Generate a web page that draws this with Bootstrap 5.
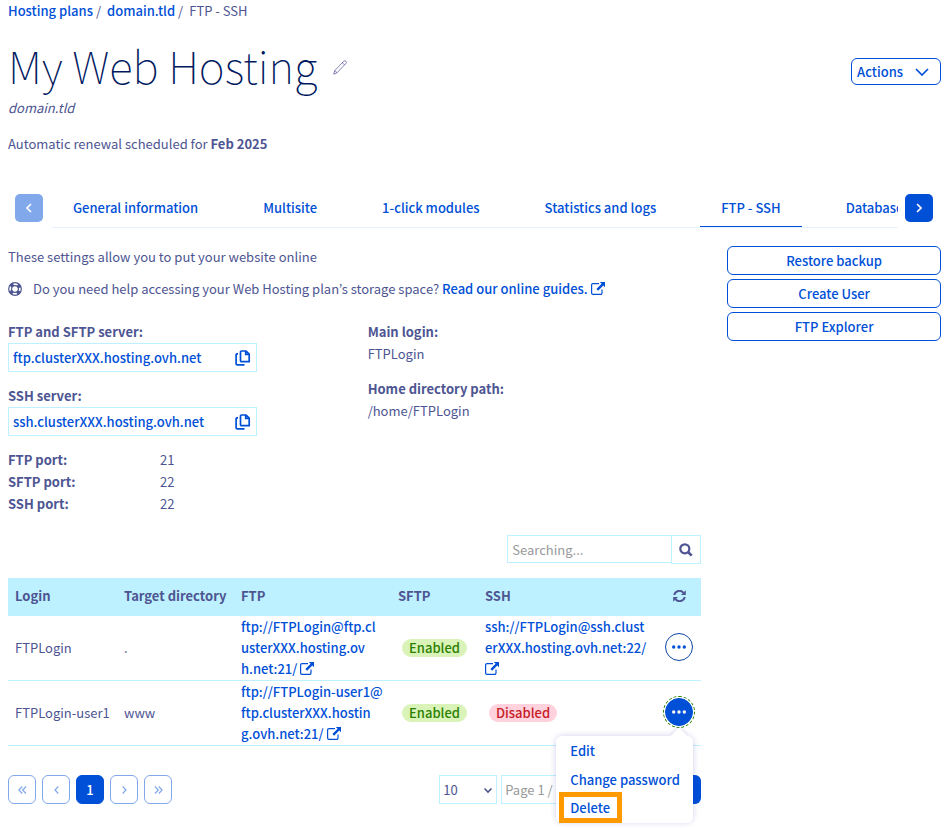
<!DOCTYPE html>
<html lang="en">
<head>
<meta charset="utf-8">
<meta name="viewport" content="width=device-width, initial-scale=1">
<title>My Web Hosting - FTP - SSH</title>
<link rel="stylesheet" href="https://cdn.jsdelivr.net/npm/bootstrap@5.3.0/dist/css/bootstrap.min.css">
<style>
:root{--link:#0050d7;--ink:#4d5592;--line:#bef1ff}
body{font-family:"Noto Sans CJK KR","Source Sans Pro",sans-serif;font-size:13px;line-height:22px;color:var(--ink)}
a{color:var(--link);text-decoration:none;font-weight:500}
a:hover{text-decoration:underline}
strong,dt,th{font-weight:700}
svg{fill:currentColor;flex:none}
.page{padding:0 7px 24px 8px;overflow-x:clip}
.crumbs{--bs-breadcrumb-divider-color:var(--ink);--bs-breadcrumb-item-active-color:var(--ink);--bs-breadcrumb-item-padding-x:4px;font-size:13px}
.crumbs .breadcrumb-item+.breadcrumb-item{padding-left:3px}
.crumbs .breadcrumb-item+.breadcrumb-item::before{padding-right:6px}
.head{padding-top:13px}
.title{font-family:"Noto Sans CJK KR Thin","Noto Sans CJK KR Light","Noto Sans CJK KR",sans-serif;font-size:44px;line-height:60px;font-weight:100;color:#00185e}
.subtitle{margin:2px 0 14px}
.btn-line{--bs-btn-color:var(--link);--bs-btn-border-color:var(--link);--bs-btn-hover-color:#fff;--bs-btn-hover-bg:var(--link);--bs-btn-padding-x:5px;--bs-btn-padding-y:2px;--bs-btn-font-size:13px;--bs-btn-border-radius:6px;--bs-btn-line-height:23px;font-weight:500}
.btn-actions{--bs-btn-line-height:21px;gap:12px;padding-right:11px;margin-top:23px}
.tab-bar{padding:34px 8px 0 7px}
.btn-arrow{width:28px;height:28px;background:var(--link);color:#fff;border:0;border-radius:5px;margin-bottom:2px}
.btn-arrow:disabled{background:#80a8eb;opacity:1;color:#fff}
.tabs{border-bottom:1px solid #e6f2ff;overflow:hidden;gap:23px;min-width:0;margin:0 7px 0 9px}
.tabs .nav-link{color:var(--link);font-weight:500;padding:8px 21px 7px;border-bottom:1px solid transparent;white-space:nowrap}
.tabs .nav-link.active{border-color:var(--link)}
.cols{--bs-gutter-x:26px}
.body-row{padding-top:18px}
.help-line{gap:11px;padding-top:2px;margin-bottom:21px}
.copy-box{border:1px solid var(--line);width:249px;height:29px;padding:0 5px 0 4px;margin-bottom:13px}
.copy-box .btn{color:var(--link)}
.ports{display:grid;grid-template-columns:152px 1fr;margin-bottom:20px}
.login-info dd{margin-bottom:13px}
.search{width:194px;margin-bottom:14px}
.search .form-control{border:1px solid var(--line);border-radius:0;font-size:13px;line-height:22px;padding:2px 4px;height:28px}
.search .btn{border:1px solid var(--line);border-radius:0;width:30px;height:29px;color:var(--ink)}
.form-control::placeholder{color:#999}
.grid-table{table-layout:fixed;--bs-table-bg:transparent;--bs-table-color:var(--ink);color:var(--ink);border-color:var(--line)}
.grid-table>thead th{background:var(--line);padding:7px 7px 8px;vertical-align:middle}
.grid-table>tbody td{padding:0 7px 1px;line-height:21px;vertical-align:middle;border-color:var(--line)}
.grid-table>tbody td:last-child{padding:0 8px 2px}
.grid-table td.url{word-break:break-all}
.ext{vertical-align:-1px}
.w-login{width:109px}.w-dir{width:117px}.w-ftp{width:157px}.w-sftp{width:87px}.w-act{width:44px}
.pill{font-size:13px;line-height:18px;font-weight:500;padding:0 7px;border-radius:9px;display:inline-block;margin-left:4px}
.pill-on{background:#daf3b9;color:#2b8000}
.pill-off{background:#ffd2dd;color:#c51b27}
.dots{width:28px;height:28px;border-radius:50%;border:1px solid #0b45a8;color:var(--link);background:#fff}
.dots-open{background:var(--link);color:#fff;border-color:var(--link);outline:1px dashed #2b8000;outline-offset:1px}
.act-menu{position:absolute;top:38px;right:0;width:137px;height:86px;background:#fff;border-radius:6px;box-shadow:0 0 6px rgba(0,14,156,.2);z-index:5}
.act-menu::before{content:"";position:absolute;top:-6px;right:8px;width:12px;height:12px;background:#fff;transform:rotate(45deg);box-shadow:-2px -2px 3px rgba(0,14,156,.08)}
.act-menu ul{position:relative;background:#fff;border-radius:6px}
.act-menu a{display:block;line-height:29px;padding-left:14px}
.act-menu .marked{border:5px solid #f90;width:63px;line-height:21px;padding-left:6px;margin:-2px 0 0 3px}
.table-foot{padding-top:5px}
.pager{--bs-pagination-color:#80a8eb;--bs-pagination-border-color:#80a8eb;--bs-pagination-disabled-color:#80a8eb;--bs-pagination-disabled-border-color:#80a8eb;--bs-pagination-disabled-bg:#fff;--bs-pagination-active-bg:var(--link);--bs-pagination-active-border-color:var(--link);gap:6px}
.pager .page-item .page-link{width:28px;height:29px;padding:0;border-radius:6px;margin:0;display:flex;align-items:center;justify-content:center;font-size:13px}
.size-select{width:58px;height:29px;font-size:13px;line-height:22px;border:1px solid var(--line);border-radius:0;color:var(--ink);padding:2px 16px 2px 3px;background-size:10px;background-position:right 3px center;background-image:url("data:image/svg+xml,%3Csvg xmlns='http://www.w3.org/2000/svg' viewBox='0 0 10 10'%3E%3Cpath d='M1.500 3.500 5 7l3.500-3.500' fill='none' stroke='%234d5592' stroke-width='1.600'/%3E%3C/svg%3E")}
.goto{width:200px}
.goto .form-control{border:1px solid var(--line);border-radius:0;font-size:13px;line-height:22px;padding:2px 3px;height:29px}
.goto .btn{background:var(--link);color:#fff;width:32px;height:29px;font-size:13px;line-height:22px;font-weight:500;border-radius:0 6px 6px 0}
</style>
</head>
<body>
<svg class="d-none" aria-hidden="true">
  <symbol id="ext" viewBox="0 0 14 13"><path d="M8 1.600H2A1.400 1.400 0 0 0 .6 3v8A1.400 1.400 0 0 0 2 12.400h7.600A1.400 1.400 0 0 0 11 11V7.500" fill="none" stroke="currentColor" stroke-width="1.200"/><path d="M8.800 0H14v5.200l-1.700-1.700-5.200 5.300-1.700-1.700 5.200-5.300z"/></symbol>
  <symbol id="copy" viewBox="0 0 16 16"><path d="M6.500 1h4.600L14.200 4v7.700h-7.700a1 1 0 0 1-1-1V2a1 1 0 0 1 1-1zM10.700 1v3.400h3.500M3 3.800H2a.9.900 0 0 0-.9.9v9a1.200 1.200 0 0 0 1.200 1.200h7.200" fill="none" stroke="currentColor" stroke-width="1.700" stroke-linejoin="round"/></symbol>
  <symbol id="dots3" viewBox="0 0 16 4"><circle cx="2.700" cy="2" r="1.700"/><circle cx="8" cy="2" r="1.700"/><circle cx="13.300" cy="2" r="1.700"/></symbol>
</svg>
<div class="container-fluid page">
  <nav aria-label="breadcrumb">
    <ol class="breadcrumb crumbs mb-0">
      <li class="breadcrumb-item"><a href="#">Hosting plans</a></li>
      <li class="breadcrumb-item"><a href="#">domain.tld</a></li>
      <li class="breadcrumb-item active" aria-current="page">FTP - SSH</li>
    </ol>
  </nav>

  <header class="head d-flex justify-content-between align-items-start">
    <div>
      <div class="d-flex align-items-center">
        <h1 class="title mb-0">My Web Hosting</h1>
        <button type="button" class="btn p-0 border-0 d-flex ms-3 mt-1" aria-label="Edit name">
          <svg width="14" height="15" viewBox="0 0 14 15"><path d="M.7 14.200 1.800 10.500 10.700 1.300a1.500 1.500 0 0 1 2.200 2.200L4 12.800zM1.800 10.500 4 12.800M9.300 2.700l2.200 2.200" fill="none" stroke="#4d5592" stroke-width=".7"/></svg>
        </button>
      </div>
      <p class="subtitle fst-italic">domain.tld</p>
      <p class="mb-0">Automatic renewal scheduled for <strong>Feb 2025</strong></p>
    </div>
    <button type="button" class="btn btn-line btn-actions d-flex align-items-center">Actions
      <svg width="14" height="8" viewBox="0 0 14 8"><path d="M1 1l6 6 6-6" fill="none" stroke="currentColor" stroke-width="1.700"/></svg>
    </button>
  </header>

  <div class="tab-bar d-flex align-items-center">
    <button type="button" class="btn btn-arrow p-0 d-flex flex-shrink-0 align-items-center justify-content-center" disabled aria-label="Previous tabs"><svg width="6" height="10" viewBox="0 0 6 10"><path d="M5 1 1 5l4 4" fill="none" stroke="currentColor" stroke-width="1.600"/></svg></button>
    <ul class="nav flex-nowrap tabs flex-fill">
      <li class="nav-item"><a class="nav-link" href="#">General information</a></li>
      <li class="nav-item"><a class="nav-link" href="#">Multisite</a></li>
      <li class="nav-item"><a class="nav-link" href="#">1-click modules</a></li>
      <li class="nav-item"><a class="nav-link" href="#">Statistics and logs</a></li>
      <li class="nav-item"><a class="nav-link active" href="#" aria-current="page">FTP - SSH</a></li>
      <li class="nav-item"><a class="nav-link" href="#">Databases</a></li>
    </ul>
    <button type="button" class="btn btn-arrow p-0 d-flex flex-shrink-0 align-items-center justify-content-center" aria-label="Next tabs"><svg width="6" height="10" viewBox="0 0 6 10"><path d="M1 1l4 4-4 4" fill="none" stroke="currentColor" stroke-width="1.600"/></svg></button>
  </div>

  <div class="row cols body-row">
    <main class="col-9">
      <p class="mb-2">These settings allow you to put your website online</p>
      <p class="help-line d-flex align-items-center">
        <svg width="14" height="14" viewBox="0 0 14 14"><circle cx="7" cy="7" r="6.300" fill="none" stroke="currentColor" stroke-width="1.200"/><circle cx="7" cy="7" r="4.900" fill="none" stroke="currentColor" stroke-width="3.600" stroke-dasharray="3.400 4.297" stroke-dashoffset="-2.149"/><circle cx="7" cy="7" r="3.400" fill="none" stroke="currentColor" stroke-width="1.200"/></svg>
        <span>Do you need help accessing your Web Hosting plan’s storage space? <a href="#">Read our online guides. <svg class="ext" width="14" height="13"><use href="#ext"/></svg></a></span>
      </p>

      <div class="row cols">
        <div class="col-6">
          <strong class="d-block">FTP and SFTP server:</strong>
          <div class="copy-box d-flex align-items-center justify-content-between"><a href="#">ftp.clusterXXX.hosting.ovh.net</a><button type="button" class="btn p-0 border-0 d-flex" aria-label="Copy FTP server"><svg width="16" height="16"><use href="#copy"/></svg></button></div>
          <strong class="d-block">SSH server:</strong>
          <div class="copy-box d-flex align-items-center justify-content-between"><a href="#">ssh.clusterXXX.hosting.ovh.net</a><button type="button" class="btn p-0 border-0 d-flex" aria-label="Copy SSH server"><svg width="16" height="16"><use href="#copy"/></svg></button></div>
          <dl class="ports">
            <dt>FTP port:</dt><dd class="mb-0">21</dd>
            <dt>SFTP port:</dt><dd class="mb-0">22</dd>
            <dt>SSH port:</dt><dd class="mb-0">22</dd>
          </dl>
        </div>
        <dl class="col-6 mb-0 login-info">
          <dt>Main login:</dt><dd>FTPLogin</dd>
          <dt>Home directory path:</dt><dd>/home/FTPLogin</dd>
        </dl>
      </div>

      <form class="search d-flex ms-auto" role="search">
        <input class="form-control border-end-0" type="search" placeholder="Searching..." aria-label="Search">
        <button type="button" class="btn p-0 d-flex align-items-center justify-content-center flex-shrink-0" aria-label="Search"><svg width="14" height="14" viewBox="0 0 14 14"><circle cx="5.800" cy="5.800" r="4.500" fill="none" stroke="currentColor" stroke-width="2.200"/><path d="m9 9 3.700 3.700" stroke="currentColor" stroke-width="2.600"/></svg></button>
      </form>

      <table class="table grid-table mb-4">
        <thead><tr>
          <th class="w-login" scope="col">Login</th><th class="w-dir text-nowrap" scope="col">Target directory</th><th class="w-ftp" scope="col">FTP</th><th class="w-sftp" scope="col">SFTP</th><th scope="col">SSH</th>
          <th class="w-act" scope="col"><button type="button" class="btn p-0 border-0 d-flex mx-auto" aria-label="Refresh"><svg width="13" height="12" viewBox="0 0 13 12" color="#4d5592"><path d="M1.200 5A5.300 5.300 0 0 1 10.500 2.800M11.800 7A5.300 5.300 0 0 1 2.500 9.200" fill="none" stroke="currentColor" stroke-width="1.900"/><path d="M12.800.2V5H8zM.2 11.800V7H5z"/></svg></button></th>
        </tr></thead>
        <tbody>
          <tr>
            <td>FTPLogin</td><td>.</td>
            <td class="url"><a href="#">ftp://FTPLogin@ftp.cl<br>usterXXX.hosting.ov<br>h.net:21/ <svg class="ext" width="14" height="13"><use href="#ext"/></svg></a></td>
            <td><span class="pill pill-on">Enabled</span></td>
            <td class="url"><a href="#">ssh://FTPLogin@ssh.clusterXXX.hosting.ovh.net:22/ <svg class="ext" width="14" height="13"><use href="#ext"/></svg></a></td>
            <td><button type="button" class="dots p-0 d-flex align-items-center justify-content-center" aria-label="Actions"><svg width="16" height="4"><use href="#dots3"/></svg></button></td>
          </tr>
          <tr>
            <td>FTPLogin-user1</td><td>www</td>
            <td class="url"><a href="#">ftp://FTPLogin-user1@<br>ftp.clusterXXX.hostin<br>g.ovh.net:21/ <svg class="ext" width="14" height="13"><use href="#ext"/></svg></a></td>
            <td><span class="pill pill-on">Enabled</span></td>
            <td><span class="pill pill-off">Disabled</span></td>
            <td><div class="position-relative">
              <button type="button" class="dots dots-open p-0 d-flex align-items-center justify-content-center" aria-label="Actions" aria-expanded="true"><svg width="16" height="4"><use href="#dots3"/></svg></button>
              <div class="act-menu"><ul class="list-unstyled mb-0">
                <li><a href="#">Edit</a></li>
                <li><a href="#">Change password</a></li>
                <li><a class="marked" href="#">Delete</a></li>
              </ul></div>
            </div></td>
          </tr>
        </tbody>
      </table>

      <div class="table-foot d-flex justify-content-between">
        <nav aria-label="Pages"><ul class="pagination pager mb-0">
          <li class="page-item disabled"><a class="page-link" href="#" aria-label="First"><svg width="9" height="8" viewBox="0 0 9 8"><path d="M4.200.5.900 4l3.300 3.500M8 .5 4.700 4 8 7.500" fill="none" stroke="currentColor" stroke-width="1.200"/></svg></a></li>
          <li class="page-item disabled"><a class="page-link" href="#" aria-label="Previous"><svg width="5" height="8" viewBox="0 0 5 8"><path d="M4.300.5 1 4l3.300 3.500" fill="none" stroke="currentColor" stroke-width="1.200"/></svg></a></li>
          <li class="page-item active"><a class="page-link" href="#">1</a></li>
          <li class="page-item disabled"><a class="page-link" href="#" aria-label="Next"><svg width="5" height="8" viewBox="0 0 5 8"><path d="M.7.500 4 4 .7 7.500" fill="none" stroke="currentColor" stroke-width="1.200"/></svg></a></li>
          <li class="page-item disabled"><a class="page-link" href="#" aria-label="Last"><svg width="9" height="8" viewBox="0 0 9 8"><path d="M1 .5 4.300 4 1 7.500M4.800.5 8.100 4 4.800 7.500" fill="none" stroke="currentColor" stroke-width="1.200"/></svg></a></li>
        </ul></nav>
        <form class="d-flex">
          <select class="form-select size-select me-1" aria-label="Rows per page"><option>10</option><option>25</option></select>
          <div class="goto d-flex"><input class="form-control" type="text" placeholder="Page 1 / 1" aria-label="Page"><button type="button" class="btn p-0 flex-shrink-0" aria-label="Go to page"></button></div>
        </form>
      </div>
    </main>

    <aside class="col-3 d-flex flex-column gap-1">
      <button type="button" class="btn btn-line">Restore backup</button>
      <button type="button" class="btn btn-line">Create User</button>
      <button type="button" class="btn btn-line">FTP Explorer</button>
    </aside>
  </div>
</div>
<script src="https://cdn.jsdelivr.net/npm/bootstrap@5.3.0/dist/js/bootstrap.bundle.min.js"></script>
</body>
</html>
